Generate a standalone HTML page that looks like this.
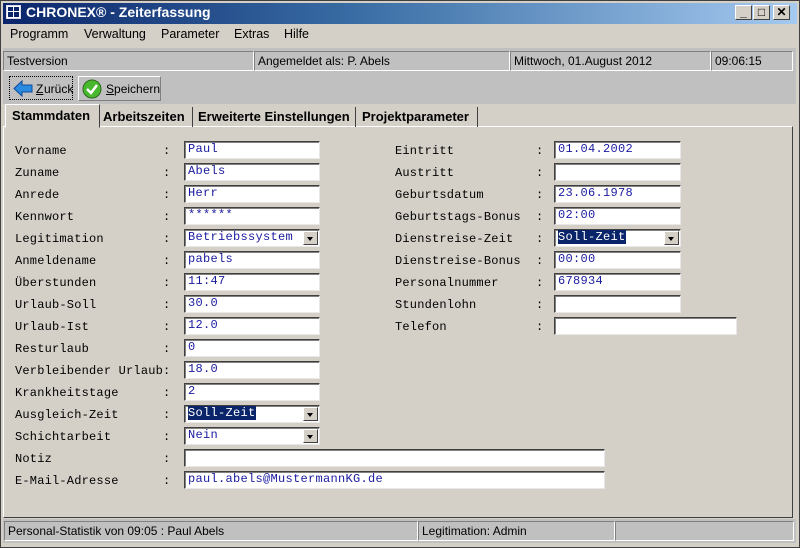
<!DOCTYPE html>
<html><head><meta charset="utf-8"><style>
*{box-sizing:border-box;margin:0;padding:0}
body{width:800px;height:548px;overflow:hidden;background:#d4d0c8;font-family:"Liberation Sans",sans-serif;position:relative}
.a{position:absolute}
.title{left:0;top:0;width:800px;height:24px;background:linear-gradient(90deg,#0a246a 0%,#3a6ea5 45%,#a6caf0 100%);}
.tt{left:26px;top:4px;color:#fff;font-weight:bold;font-size:14px}
.wb{top:5px;width:17px;height:15px;background:#d4d0c8;border:1px solid;border-color:#fff #404040 #404040 #fff;font-size:12px;font-weight:bold;text-align:center;line-height:13px;color:#000}
.menu{top:27px;font-size:12.5px;color:#000}
.frame{left:0;top:0;width:800px;height:548px;border:3px solid #d4d0c8;outline:1px solid #404040;outline-offset:-1px}
.pan{height:20px;border:1px solid;border-color:#808080 #fff #fff #808080;background:#c0c0c0;font-size:12px;padding:2px 3px;color:#000;white-space:nowrap}
.lab{font-family:"Liberation Mono",monospace;font-size:12px;color:#000;letter-spacing:0.2px}
.inp{height:18px;background:#fff;border:1px solid;border-color:#404040 #e8e8e8 #e8e8e8 #404040;box-shadow:inset 1px 1px 0 #808080;font-family:"Liberation Mono",monospace;font-size:12px;color:#1a1aa0;padding:0 0 0 3px;letter-spacing:0.3px;white-space:nowrap}
.dd{position:absolute;right:1px;top:1px;width:15px;height:14px;background:#d4d0c8;border:1px solid;border-color:#fff #404040 #404040 #fff}
.dd:after{content:"";position:absolute;left:3px;top:5px;border:3px solid transparent;border-top:4px solid #000;border-bottom:0}
.sel{background:#0a246a;color:#fff}
.tab{top:107px;height:20px;font-size:13px;font-weight:bold;color:#000;padding-top:2px;border-right:1px solid #404040}
</style></head><body>
<div class="a title"></div>
<div class="a" style="left:6px;top:5px;width:15px;height:14px;background:#fff;border:1px solid #dde"><div class="a" style="left:1px;top:1px;width:5px;height:4px;background:#0a246a"></div><div class="a" style="left:7px;top:1px;width:5px;height:4px;background:#0a246a"></div><div class="a" style="left:1px;top:6px;width:5px;height:5px;background:#0a246a"></div><div class="a" style="left:7px;top:6px;width:5px;height:5px;background:#0a246a"></div></div>
<div class="a tt">CHRONEX® - Zeiterfassung</div>
<div class="a wb" style="left:735px">_</div>
<div class="a wb" style="left:753px">□</div>
<div class="a wb" style="left:773px">✕</div>
<div class="a menu" style="left:10px">Programm</div>
<div class="a menu" style="left:84px">Verwaltung</div>
<div class="a menu" style="left:161px">Parameter</div>
<div class="a menu" style="left:234px">Extras</div>
<div class="a menu" style="left:284px">Hilfe</div>
<div class="a" style="left:3px;top:48px;width:793px;height:56px;background:#c0c0c0"></div>
<div class="a pan" style="left:3px;top:51px;width:251px">Testversion</div>
<div class="a pan" style="left:254px;top:51px;width:256px">Angemeldet als: P. Abels</div>
<div class="a pan" style="left:510px;top:51px;width:201px">Mittwoch, 01.August 2012</div>
<div class="a pan" style="left:711px;top:51px;width:82px">09:06:15</div>
<div class="a" style="left:9px;top:76px;width:64px;height:24px;border:1px dotted #000;font-size:12px"><svg class="a" style="left:3px;top:3px" width="20" height="17"><path d="M1 8.5 L9 1 V5 H19 V12 H9 V16 Z" fill="#2a8ae0" stroke="#0a4a9a"/></svg><span class="a" style="left:26px;top:5px;text-decoration:underline">Z</span><span class="a" style="left:34px;top:5px">urück</span></div>
<div class="a" style="left:78px;top:76px;width:83px;height:25px;border:1px solid;border-color:#fff #808080 #808080 #fff;font-size:12px"><svg class="a" style="left:3px;top:2px" width="20" height="20"><circle cx="10" cy="10" r="9" fill="#4ab82e" stroke="#2a6a1a"/><path d="M5 10 L9 14 L15 6" stroke="#fff" stroke-width="2.5" fill="none"/></svg><span class="a" style="left:27px;top:5px"><u>S</u>peichern</span></div>
<div class="a" style="left:3px;top:126px;width:790px;height:392px;border:1px solid;border-color:#fff #404040 #404040 #fff;background:#d4d0c8"></div>
<div class="a" style="left:5px;top:104px;width:95px;height:24px;background:#d4d0c8;border:1px solid;border-color:#fff #404040 transparent #fff"></div>
<div class="a tab" style="left:12px;top:106px;border:none">Stammdaten</div>
<div class="a tab" style="left:100px;width:93px;padding-left:3px">Arbeitszeiten</div>
<div class="a tab" style="left:193px;width:163px;padding-left:5px">Erweiterte Einstellungen</div>
<div class="a tab" style="left:356px;width:122px;padding-left:6px">Projektparameter</div>

<div class="a lab" style="left:15px;top:144px">Vorname</div><div class="a lab" style="left:163px;top:144px">:</div><div class="a inp" style="left:184px;top:141px;width:136px">Paul</div>
<div class="a lab" style="left:15px;top:166px">Zuname</div><div class="a lab" style="left:163px;top:166px">:</div><div class="a inp" style="left:184px;top:163px;width:136px">Abels</div>
<div class="a lab" style="left:15px;top:188px">Anrede</div><div class="a lab" style="left:163px;top:188px">:</div><div class="a inp" style="left:184px;top:185px;width:136px">Herr</div>
<div class="a lab" style="left:15px;top:210px">Kennwort</div><div class="a lab" style="left:163px;top:210px">:</div><div class="a inp" style="left:184px;top:207px;width:136px">******</div>
<div class="a lab" style="left:15px;top:232px">Legitimation</div><div class="a lab" style="left:163px;top:232px">:</div><div class="a inp" style="left:184px;top:229px;width:136px">Betriebssystem<div class="dd"></div></div>
<div class="a lab" style="left:15px;top:254px">Anmeldename</div><div class="a lab" style="left:163px;top:254px">:</div><div class="a inp" style="left:184px;top:251px;width:136px">pabels</div>
<div class="a lab" style="left:15px;top:276px">Überstunden</div><div class="a lab" style="left:163px;top:276px">:</div><div class="a inp" style="left:184px;top:273px;width:136px">11:47</div>
<div class="a lab" style="left:15px;top:298px">Urlaub-Soll</div><div class="a lab" style="left:163px;top:298px">:</div><div class="a inp" style="left:184px;top:295px;width:136px">30.0</div>
<div class="a lab" style="left:15px;top:320px">Urlaub-Ist</div><div class="a lab" style="left:163px;top:320px">:</div><div class="a inp" style="left:184px;top:317px;width:136px">12.0</div>
<div class="a lab" style="left:15px;top:342px">Resturlaub</div><div class="a lab" style="left:163px;top:342px">:</div><div class="a inp" style="left:184px;top:339px;width:136px">0</div>
<div class="a lab" style="left:15px;top:364px">Verbleibender Urlaub</div><div class="a lab" style="left:163px;top:364px">:</div><div class="a inp" style="left:184px;top:361px;width:136px">18.0</div>
<div class="a lab" style="left:15px;top:386px">Krankheitstage</div><div class="a lab" style="left:163px;top:386px">:</div><div class="a inp" style="left:184px;top:383px;width:136px">2</div>
<div class="a lab" style="left:15px;top:408px">Ausgleich-Zeit</div><div class="a lab" style="left:163px;top:408px">:</div><div class="a inp" style="left:184px;top:405px;width:136px"><span class="sel">Soll-Zeit</span><div class="dd"></div></div>
<div class="a lab" style="left:15px;top:430px">Schichtarbeit</div><div class="a lab" style="left:163px;top:430px">:</div><div class="a inp" style="left:184px;top:427px;width:136px">Nein<div class="dd"></div></div>
<div class="a lab" style="left:15px;top:452px">Notiz</div><div class="a lab" style="left:163px;top:452px">:</div><div class="a inp" style="left:184px;top:449px;width:421px"></div>
<div class="a lab" style="left:15px;top:474px">E-Mail-Adresse</div><div class="a lab" style="left:163px;top:474px">:</div><div class="a inp" style="left:184px;top:471px;width:421px">paul.abels@MustermannKG.de</div>

<div class="a lab" style="left:395px;top:144px">Eintritt</div><div class="a lab" style="left:536px;top:144px">:</div><div class="a inp" style="left:554px;top:141px;width:127px">01.04.2002</div>
<div class="a lab" style="left:395px;top:166px">Austritt</div><div class="a lab" style="left:536px;top:166px">:</div><div class="a inp" style="left:554px;top:163px;width:127px"></div>
<div class="a lab" style="left:395px;top:188px">Geburtsdatum</div><div class="a lab" style="left:536px;top:188px">:</div><div class="a inp" style="left:554px;top:185px;width:127px">23.06.1978</div>
<div class="a lab" style="left:395px;top:210px">Geburtstags-Bonus</div><div class="a lab" style="left:536px;top:210px">:</div><div class="a inp" style="left:554px;top:207px;width:127px">02:00</div>
<div class="a lab" style="left:395px;top:232px">Dienstreise-Zeit</div><div class="a lab" style="left:536px;top:232px">:</div><div class="a inp" style="left:554px;top:229px;width:127px"><span class="sel">Soll-Zeit</span><div class="dd"></div></div>
<div class="a lab" style="left:395px;top:254px">Dienstreise-Bonus</div><div class="a lab" style="left:536px;top:254px">:</div><div class="a inp" style="left:554px;top:251px;width:127px">00:00</div>
<div class="a lab" style="left:395px;top:276px">Personalnummer</div><div class="a lab" style="left:536px;top:276px">:</div><div class="a inp" style="left:554px;top:273px;width:127px">678934</div>
<div class="a lab" style="left:395px;top:298px">Stundenlohn</div><div class="a lab" style="left:536px;top:298px">:</div><div class="a inp" style="left:554px;top:295px;width:127px"></div>
<div class="a lab" style="left:395px;top:320px">Telefon</div><div class="a lab" style="left:536px;top:320px">:</div><div class="a inp" style="left:554px;top:317px;width:183px"></div>

<div class="a" style="left:3px;top:519px;width:793px;height:24px;background:#c0c0c0"></div>
<div class="a pan" style="left:4px;top:521px;width:414px">Personal-Statistik von 09:05 : Paul Abels</div>
<div class="a pan" style="left:418px;top:521px;width:197px">Legitimation: Admin</div>
<div class="a pan" style="left:615px;top:521px;width:179px"></div>
<div class="a frame"></div>
</body></html>
